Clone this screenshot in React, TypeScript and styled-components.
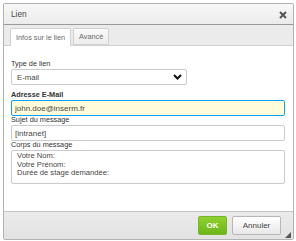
import React from "react";
import styled, { createGlobalStyle } from "styled-components";

const Global = createGlobalStyle`
  html, body { margin: 0; padding: 0; background: #ffffff; }
  body { font-family: "Liberation Sans", Arial, sans-serif; }
  * { box-sizing: border-box; }
`;

const Page = styled.div`
  width: 296px;
  height: 241px;
  padding: 3px 0 0 3px;
  overflow: hidden;
  background: #ffffff;
`;

const Dialog = styled.div`
  position: relative;
  width: 291px;
  height: 237px;
  border: 1px solid #b2b2b2;
  border-radius: 2px;
  display: flex;
  flex-direction: column;
  background: #ffffff;
  overflow: hidden;
`;

const TitleBar = styled.div`
  height: 21px;
  flex: none;
  display: flex;
  align-items: center;
  justify-content: space-between;
  padding: 0 6px 0 7px;
  background: linear-gradient(#f8f8f8, #ebebeb);
  border-bottom: 1px solid #999999;
  color: #474747;
  font-size: 8.3px;
`;

const CloseBtn = styled.span`
  display: flex;
  width: 8px;
  height: 8px;
  margin-top: 1px;
`;

const TabBar = styled.div`
  height: 21px;
  flex: none;
  display: flex;
  align-items: flex-end;
  gap: 2px;
  padding: 0 0 0 6px;
  background: #ebebeb;
  border-bottom: 1px solid #d1d1d1;
`;

const Tab = styled.div<{ $active?: boolean }>`
  height: ${(p) => (p.$active ? "18px" : "17px")};
  margin-bottom: ${(p) => (p.$active ? "-1px" : "0")};
  padding: 0 5px;
  display: flex;
  align-items: center;
  font-size: 7.3px;
  color: #6a6a6a;
  background: ${(p) => (p.$active ? "#ffffff" : "linear-gradient(#fafafa, #ededed)")};
  border: 1px solid #d1d1d1;
  border-bottom: ${(p) => (p.$active ? "none" : "1px solid #d1d1d1")};
  border-radius: 2px 2px 0 0;
`;

const Content = styled.div`
  flex: 1;
  padding: 14px 7px 0 7px;
  display: flex;
  flex-direction: column;
`;

const Label = styled.div<{ $bold?: boolean; $gap?: number }>`
  height: 8px;
  line-height: 8px;
  margin-top: ${(p) => p.$gap ?? 0}px;
  margin-bottom: 1px;
  font-size: 7.3px;
  font-weight: ${(p) => (p.$bold ? 700 : 400)};
  color: #333333;
  white-space: nowrap;
`;

const Select = styled.div`
  width: 176px;
  height: 16px;
  border: 1px solid #c9cccf;
  border-radius: 2px;
  background: #ffffff;
  display: flex;
  align-items: center;
  justify-content: space-between;
  padding: 0 4px 0 5px;
  font-size: 7.8px;
  color: #474747;
`;

const Input = styled.div<{ $focus?: boolean }>`
  width: 274px;
  height: 16px;
  border: 1px solid ${(p) => (p.$focus ? "#139ff7" : "#c9cccf")};
  background: ${(p) => (p.$focus ? "#fffcdc" : "#ffffff")};
  border-radius: 2px;
  display: flex;
  align-items: center;
  padding: 0 3px;
  font-size: 8px;
  color: #474747;
`;

const TextArea = styled.div`
  width: 274px;
  height: 34px;
  border: 1px solid #c9cccf;
  border-radius: 2px;
  padding: 1px 5px;
  font-size: 7.6px;
  line-height: 8.7px;
  color: #474747;
`;

const Footer = styled.div`
  position: relative;
  height: 28px;
  flex: none;
  display: flex;
  align-items: center;
  justify-content: flex-end;
  gap: 5px;
  padding: 0 12px 0 0;
  background: linear-gradient(#ebebeb, #e2e2e2);
  border-top: 1px solid #c4c4c4;
`;

const Button = styled.div<{ $primary?: boolean }>`
  height: 19px;
  width: ${(p) => (p.$primary ? "29px" : "49px")};
  display: flex;
  align-items: center;
  justify-content: center;
  border-radius: 2px;
  font-size: 8px;
  font-weight: ${(p) => (p.$primary ? 700 : 400)};
  color: ${(p) => (p.$primary ? "#ffffff" : "#474747")};
  background: ${(p) =>
    p.$primary ? "linear-gradient(#90d12f, #6cb51a)" : "linear-gradient(#ffffff, #e8e8e8)"};
  border: 1px solid ${(p) => (p.$primary ? "#79b52a" : "#b6b6b6")};
`;

const Grip = styled.span`
  position: absolute;
  right: 2px;
  bottom: 1px;
  width: 6px;
  height: 6px;
  display: flex;
`;

const Chevron = () => (
  <svg width="9" height="6" viewBox="0 0 9 6">
    <polyline points="1,1 4.5,4.5 8,1" fill="none" stroke="#111" strokeWidth="2" />
  </svg>
);

export default function App() {
  return (
    <>
      <Global />
      <Page>
        <Dialog>
          <TitleBar>
            <span>Lien</span>
            <CloseBtn>
              <svg width="8" height="8" viewBox="0 0 8 8">
                <path d="M1 1 L7 7 M7 1 L1 7" stroke="#555" strokeWidth="2" />
              </svg>
            </CloseBtn>
          </TitleBar>
          <TabBar>
            <Tab $active>Infos sur le lien</Tab>
            <Tab>Avancé</Tab>
          </TabBar>
          <Content>
            <Label>Type de lien</Label>
            <Select>
              <span>E-mail</span>
              <Chevron />
            </Select>
            <Label $bold $gap={6}>Adresse E-Mail</Label>
            <Input $focus>john.doe@inserm.fr</Input>
            <Label>Sujet du message</Label>
            <Input>[intranet]</Input>
            <Label>Corps du message</Label>
            <TextArea>
              Votre Nom:
              <br />
              Votre Prénom:
              <br />
              Durée de stage demandée:
            </TextArea>
          </Content>
          <Footer>
            <Button $primary>OK</Button>
            <Button>Annuler</Button>
            <Grip>
              <svg width="6" height="6" viewBox="0 0 6 6">
                <polygon points="6,0 6,6 0,6" fill="#555" />
              </svg>
            </Grip>
          </Footer>
        </Dialog>
      </Page>
    </>
  );
}
